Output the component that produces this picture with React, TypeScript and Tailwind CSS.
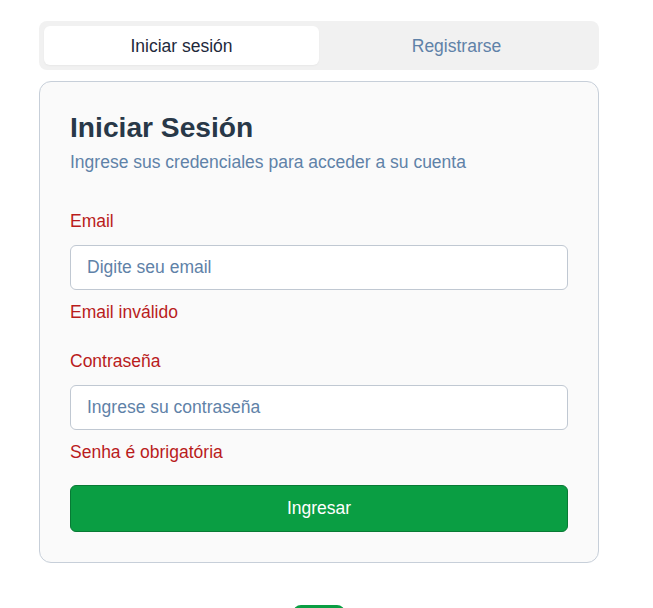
import { useState } from "react";

export default function App() {
  const [tab, setTab] = useState<"login" | "register">("login");
  const [email, setEmail] = useState("");
  const [password, setPassword] = useState("");

  return (
    <div className="h-[608px] w-full overflow-hidden bg-white font-['Liberation_Sans',Arial,sans-serif]">
      <div className="ml-[39px] w-[560px] pt-[21px]">
        <div className="grid h-[49px] grid-cols-2 rounded-lg bg-[#f1f1f1] p-[5px]">
          <button
            onClick={() => setTab("login")}
            className={`rounded-md pt-[2px] text-[17.5px] ${tab === "login" ? "bg-white text-[#1e293b] shadow-[0_1px_2px_rgba(0,0,0,0.04)]" : "text-[#5f82a8]"}`}
          >
            Iniciar sesión
          </button>
          <button
            onClick={() => setTab("register")}
            className={`rounded-md pt-[2px] text-[17.5px] ${tab === "register" ? "bg-white text-[#1e293b]" : "text-[#5f82a8]"}`}
          >
            Registrarse
          </button>
        </div>

        <div className="mt-[11px] rounded-xl border border-[#c7cfd9] bg-[#fafafa] px-[30px] pb-[30px] pt-[28px]">
          <h1 className="text-[28.2px] font-bold leading-[34px] text-[#283848]">Iniciar Sesión</h1>
          <p className="mt-[6px] text-[17.5px] leading-[24px] text-[#5f82a8]">
            Ingrese sus credenciales para acceder a su cuenta
          </p>

          <label className="mt-[35px] block text-[17.5px] leading-[24px] text-[#b91c1c]">Email</label>
          <input
            value={email}
            onChange={(e) => setEmail(e.target.value)}
            placeholder="Digite seu email"
            className="mt-[12px] h-[45px] w-full rounded-md border border-[#c0c8d2] bg-white px-[16px] text-[17.5px] text-[#1e293b] outline-none placeholder:text-[#5f82a8]"
          />
          <p className="mt-[10px] text-[17.5px] leading-[24px] text-[#b91c1c]">Email inválido</p>

          <label className="mt-[25px] block text-[17.5px] leading-[24px] text-[#b91c1c]">Contraseña</label>
          <input
            type="password"
            value={password}
            onChange={(e) => setPassword(e.target.value)}
            placeholder="Ingrese su contraseña"
            className="mt-[12px] h-[45px] w-full rounded-md border border-[#c0c8d2] bg-white px-[16px] text-[17.5px] text-[#1e293b] outline-none placeholder:text-[#5f82a8]"
          />
          <p className="mt-[10px] text-[17.5px] leading-[24px] text-[#b91c1c]">Senha é obrigatória</p>

          <button className="mt-[21px] h-[47px] w-full rounded-md border border-[#087a35] bg-[#0a9e43] text-[17.5px] text-white">
            Ingresar
          </button>
        </div>

        <div className="mx-auto mt-[42px] h-[20px] w-[52px] rounded-t-lg bg-[#0a9e43]" />
      </div>
    </div>
  );
}
